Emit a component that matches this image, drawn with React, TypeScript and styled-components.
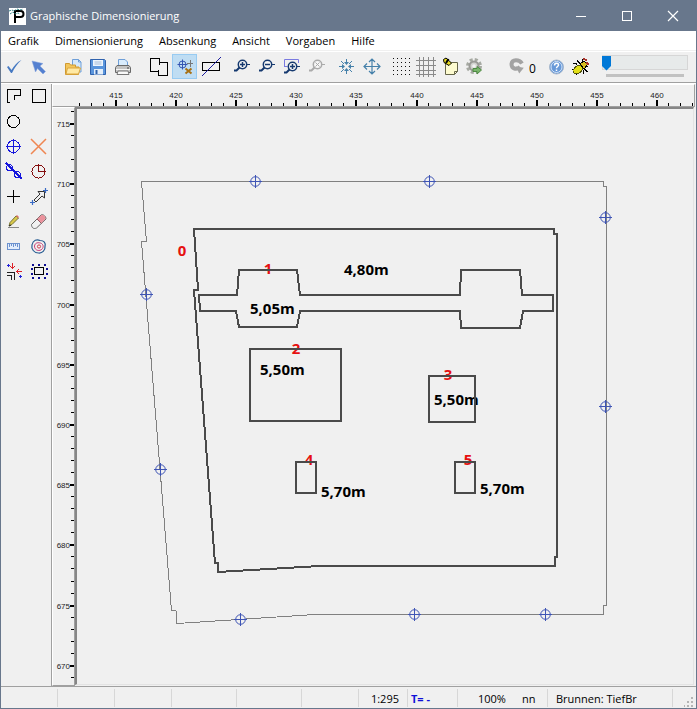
import React, { useLayoutEffect, useRef, useState } from "react";
import styled, { createGlobalStyle } from "styled-components";

const FACE = "#f0f0f0";
const UI_FONT = '"Open Sans", "Noto Sans", sans-serif';

const GlobalStyle = createGlobalStyle`
  *, *::before, *::after { box-sizing: border-box; }
  html, body { margin: 0; padding: 0; }
  body { font: 11px/16px ${UI_FONT}; color: #000; background: ${FACE}; }
  button { font: inherit; color: inherit; }
`;

const Window = styled.div`
  display: flex;
  flex-direction: column;
  min-height: 100vh;
  background: ${FACE};
  border: 1px solid #68778c;
`;

const TitleBar = styled.header`
  display: flex;
  align-items: center;
  height: 30px;
  padding-left: 8px;
  color: #fff;
  background: #68778c;
`;

const Title = styled.h1`
  flex: 1;
  margin: 0 0 0 4px;
  font-size: 11px;
  font-weight: 400;
  white-space: nowrap;
`;

const CaptionButton = styled.button`
  display: grid;
  place-items: center;
  width: 46px;
  height: 30px;
  padding: 0;
  border: 0;
  background: transparent;
`;

const MenuBar = styled.nav`
  display: flex;
  height: 20px;
  background: #fff;
  border-bottom: 1px solid ${FACE};
`;

const MenuItem = styled.button`
  height: 19px;
  padding: 0 8px;
  border: 0;
  background: transparent;

  &:first-child { padding-left: 7px; }
`;

const ToolBar = styled.div`
  display: flex;
  align-items: flex-start;
  height: 32px;
  padding-top: 2px;
  border-top: 1px solid #fff;
  border-bottom: 1px solid #a0a0a0;
`;

const ToolGroup = styled.div<{ $gap?: number }>`
  display: flex;
  flex: none;
  margin-left: ${(p) => p.$gap ?? 0}px;
`;

const ToolButton = styled.button<{ $active?: boolean }>`
  display: grid;
  place-items: center;
  width: 25px;
  height: 25px;
  padding: 0;
  border: 0;
  outline: ${(p) => (p.$active ? "1px solid #98cbf2" : "none")};
  outline-offset: -1px;
  background: ${(p) => (p.$active ? "#bfddf3" : "transparent")};
`;

const UndoCount = styled.output`
  width: 14px;
  padding-top: 6px;
  font-size: 12px;
  line-height: 18px;
`;

const SliderBox = styled.div`
  flex: 0 0 86px;
  margin: 0 8px 0 auto;
`;

const Slider = styled.input`
  appearance: none;
  display: block;
  width: 86px;
  height: 16px;
  margin: 0;
  background: transparent;

  &::-webkit-slider-runnable-track {
    height: 15px;
    border: 1px solid #d6d6d6;
    background: #e7eaea;
  }
  &::-webkit-slider-thumb {
    appearance: none;
    width: 9px;
    height: 15px;
    margin: 0 0 0 -1px;
    border: 0;
    background: #0078d7;
    clip-path: polygon(0 0, 100% 0, 100% 70%, 50% 100%, 0 70%);
  }
`;

const SliderScale = styled.div`
  height: 3px;
  margin: 4px 4px 0;
  background: #c2c2c2;
`;

const Workspace = styled.div`
  display: flex;
  flex: 1;
  border-top: 1px solid #fff;
`;

const Palette = styled.div`
  display: grid;
  grid-template-columns: repeat(2, 25px);
  grid-auto-rows: 25px;
  align-content: start;
  border-right: 1px solid #a0a0a0;
`;

const PaletteButton = styled(ToolButton)<{ $column?: number }>`
  grid-column: ${(p) => p.$column ?? "auto"};
`;

const Plan = styled.main`
  display: grid;
  flex: 1;
  grid-template: 23px 1fr / 23px 1fr;
  min-width: 0;
`;

const TopRuler = styled.div`
  grid-column: 1 / -1;
  border: solid;
  border-width: 1px;
  border-color: #fff #a0a0a0 #a0a0a0 #fff;
  margin-right: 1px;
`;

const SideRuler = styled.div`
  border: solid;
  border-width: 1px;
  border-color: #fff #a0a0a0 #a0a0a0 #fff;
`;

const DrawingPane = styled.div`
  border: solid;
  border-width: 2px 1px 1px 2px;
  border-color: #868686 #e3e3e3 #e3e3e3 #868686;
  margin: 0 2px 1px 0;
`;

const FillSvg = styled.svg`
  display: block;
  width: 100%;
  height: 100%;
`;

const ScaleText = styled.text`
  font: 8px "Liberation Sans", Arial, sans-serif;
  fill: #222;
`;

const IndexText = styled.text`
  font: 700 15px ${UI_FONT};
  fill: #e61010;
`;

const DepthText = styled.text`
  font: 700 15px ${UI_FONT};
  fill: #000;
`;

const StatusBar = styled.footer`
  display: flex;
  align-items: center;
  height: 22px;
  border-top: 1px solid #a0a0a0;
`;

const StatusCell = styled.div<{ $width: number; $align?: string; $accent?: boolean }>`
  flex: 0 0 ${(p) => p.$width}px;
  height: 18px;
  padding: 0 8px 0 3px;
  border-right: 1px solid #d7d7d7;
  line-height: 20px;
  text-align: ${(p) => p.$align ?? "left"};
  font-weight: ${(p) => (p.$accent ? 700 : 400)};
  color: ${(p) => (p.$accent ? "#1010d8" : "#000")};
  white-space: nowrap;
`;

const StatusPair = styled(StatusCell)`
  display: flex;
  gap: 16px;
  padding-left: 20px;
`;

const StatusText = styled(StatusCell)`
  padding-left: 8px;
`;

const Grip = styled.svg`
  align-self: flex-end;
  margin: 0 2px 1px auto;
`;

const Glyph = ({ children, crisp }: { children: React.ReactNode; crisp?: boolean }) => (
  <svg width="25" height="25" viewBox="0 0 25 25" fill="none" aria-hidden="true"
    shapeRendering={crisp ? "crispEdges" : "auto"}>
    {children}
  </svg>
);

const Loupe = ({ color, x = 0, y = 0, children }: { color: string; x?: number; y?: number; children?: React.ReactNode }) => (
  <g stroke={color} transform={`translate(${x} ${y})`}>
    <path d="M5 16.500h2.500l4-4" strokeWidth="2" />
    <circle cx="13.500" cy="10.500" r="4.200" strokeWidth="1.500" fill="#f6f6f6" />
    <path d="M18 10.500h3" />
    {children}
  </g>
);

type Tool = { name: string; icon: React.ReactNode };

const groups: { gap: number; tools: Tool[] }[] = [
  {
    gap: 0,
    tools: [
      { name: "Übernehmen", icon: <Glyph><path d="M6 13l1.500-1 3 4C13 12 16 8 20.500 6 16.500 9.500 13.500 14 11 19h-1z" fill="#4679c2" /></Glyph> },
      { name: "Auswählen", icon: <Glyph><path d="M6 7l11 2.500-3 2.500 5.500 5.500-2.500 2.500-5.500-5.500L9.500 18z" fill="#5480d0" stroke="#87a5dd" strokeWidth=".5" /></Glyph> },
    ],
  },
  {
    gap: 9,
    tools: [
      {
        name: "Öffnen",
        icon: (
          <Glyph>
            <path d="M12.500 5.500h6l2.500 2.500v10h-8.500z" fill="#d4e8fb" stroke="#6f9fd8" />
            <path d="M18.500 5.500V8H21" stroke="#6f9fd8" />
            <path d="M5.500 20.500v-11h4l1 1.500h5v2H19l-.5 7.500z" fill="#f3c65c" stroke="#d09a30" />
            <path d="M6 20l1.500-6h13l-2 6z" fill="#ffe9a4" stroke="#dba63e" />
          </Glyph>
        ),
      },
      {
        name: "Speichern",
        icon: (
          <Glyph>
            <path d="M5.500 5.500h14l1 1v14h-15z" fill="#5a95dc" stroke="#2f62ad" />
            <path d="M8 6h10v6H8z" fill="#edf5fd" />
            <path d="M9.500 8h7M9.500 10h7" stroke="#a6bcd8" />
            <path d="M9 15h9v5.500H9z" fill="#e4eef9" />
            <path d="M10.500 16h2v4h-2z" fill="#2f62ad" />
          </Glyph>
        ),
      },
      {
        name: "Drucken",
        icon: (
          <Glyph>
            <path d="M8.500 12V5.500h6.500l2.500 2.500v4z" fill="#d9ecfd" stroke="#6f9fd8" />
            <path d="M7 11.500h12l1.500 2v5h-15v-5z" fill="#c3c3c3" stroke="#696969" />
            <path d="M6 15.500h14" stroke="#f4f4f4" />
            <path d="M8 17h10l1 3.500H7z" fill="#f8f8f8" stroke="#777" />
            <path d="M17 14h2" stroke="#444" />
          </Glyph>
        ),
      },
    ],
  },
  {
    gap: 12,
    tools: [
      { name: "Umriss vereinigen", icon: <Glyph crisp><path d="M3.500 4.500h9v4h8v13h-9v-4h-8z" stroke="#000" /><path d="M12.500 8.500v2M11.500 15.500v2" stroke="#000" /></Glyph> },
      {
        name: "Brunnen setzen",
        icon: (
          <Glyph>
            <circle cx="10.500" cy="10.500" r="3.500" stroke="#3555b2" />
            <path d="M5.500 10.500h10M10.500 5.500v10" stroke="#3555b2" />
            <path d="M15 9.500h6M18.500 6v7" stroke="#777" />
            <path d="M13.500 14.500l6 5M19.500 14.500l-6 5" stroke="#a77013" strokeWidth="2" />
          </Glyph>
        ),
      },
      { name: "Schnitt", icon: <Glyph crisp><path d="M5.500 8.500h17v8h-17z" stroke="#000" /><path d="M5 22L24 3" stroke="#1c1c9e" /></Glyph> },
    ],
  },
  {
    gap: 7,
    tools: [
      { name: "Vergrößern", icon: <Glyph><Loupe color="#15396f"><path d="M11 10.500h5M13.500 8v5" strokeWidth="1.500" /></Loupe></Glyph> },
      { name: "Verkleinern", icon: <Glyph><Loupe color="#15396f"><path d="M11 10.500h5" strokeWidth="1.500" /></Loupe></Glyph> },
      { name: "Ausschnitt", icon: <Glyph><path d="M5.500 13V5.500h14V9M5.500 12.500h3" stroke="#7a7ae0" /><Loupe color="#15396f" y={2}><path d="M11 10.500h5M13.500 8v5" strokeWidth="1.500" /></Loupe></Glyph> },
      { name: "Zoom zurücksetzen", icon: <Glyph><Loupe color="#aaa"><path d="M11.500 8.500l4 4M15.500 8.500l-4 4" /></Loupe></Glyph> },
    ],
  },
  {
    gap: 5,
    tools: [
      {
        name: "Zentrieren",
        icon: (
          <Glyph>
            <path d="M5 12.500h5M15 12.500h5M12.500 5v5M12.500 15v5" stroke="#4681aa" />
            <path d="M8 10l3 2.500L8 15zM17 10l-3 2.500 3 2.500zM10 8l2.500 3L15 8zM10 17l2.500-3 2.500 3z" fill="#4681aa" />
            <path d="M7 7l3 3M18 7l-3 3M7 18l3-3M18 18l-3-3" stroke="#4681aa" />
          </Glyph>
        ),
      },
      { name: "Verschieben", icon: <Glyph><path d="M5 12.500h16M13 5v15M8 9.500l-3 3 3 3M18 9.500l3 3-3 3M10 8l3-3 3 3M10 17l3 3 3-3" stroke="#4681aa" strokeWidth="1.200" /></Glyph> },
    ],
  },
  {
    gap: 4,
    tools: [
      {
        name: "Punktraster",
        icon: (
          <Glyph crisp>
            {[5, 9, 13, 17, 21].map((y) => (
              <path key={y} d={`M5 ${y - 0.5}h17`} stroke="#111" strokeDasharray="1 3" />
            ))}
          </Glyph>
        ),
      },
      {
        name: "Linienraster",
        icon: <Glyph crisp><path d="M3 6.500h20M3 11.500h20M3 16.500h20M3 20.500h20M6.500 3v20M10.500 3v20M15.500 3v20M20.500 3v20" stroke="#8a8a8a" /></Glyph>,
      },
      {
        name: "Notiz",
        icon: (
          <Glyph>
            <path d="M7.500 8.500h12v9l-3 3h-9z" fill="#fdfbd0" stroke="#66664a" />
            <path d="M19.500 17.500h-3v3" stroke="#66664a" />
            <path d="M5.500 5.500L8 4l5.500 5-2.500 2.500-5-3z" fill="#e8dc20" stroke="#000" />
            <path d="M8 9l2.500-4" stroke="#000" strokeWidth="2" />
          </Glyph>
        ),
      },
      {
        name: "Berechnen",
        icon: (
          <Glyph>
            <circle cx="11" cy="12" r="6.500" stroke="#a7aaa3" strokeWidth="3" strokeDasharray="3 2.100" />
            <circle cx="11" cy="12" r="4.500" fill="#d2d2cf" stroke="#9a9a96" strokeWidth="2" />
            <circle cx="11" cy="12" r="1.800" fill="#f2f2f2" />
            <path d="M10 14.500h4V12.500l4.500 3.500-4.500 4v-2.500h-4z" fill="#7ab56c" stroke="#4d8a42" />
          </Glyph>
        ),
      },
    ],
  },
  {
    gap: 16,
    tools: [
      { name: "Rückgängig", icon: <Glyph><path d="M18 9.500C15 5 8 5 7.500 10c0 5 5 6 8.500 3" stroke="#a3a3a3" strokeWidth="4" /><path d="M11.500 13h8l-3.500 6.500z" fill="#a3a3a3" transform="rotate(10 15 15)" /></Glyph> },
    ],
  },
];

const helpTools: Tool[] = [
  {
    name: "Hilfe anzeigen",
    icon: (
      <Glyph>
        <circle cx="13.500" cy="13" r="7" fill="#6899d8" stroke="#a8b8cc" />
        <circle cx="13.500" cy="13" r="5.500" stroke="#d4e4f8" />
        <path d="M11.500 11.500c0-3 4-3 4-.5 0 1.500-2 1.500-2 3.200M13.500 15.500v1.600" stroke="#fff" strokeWidth="1.500" />
      </Glyph>
    ),
  },
  {
    name: "Fehlersuche",
    icon: (
      <Glyph crisp>
        <path d="M5 9h3l2 4M9 6l3 4M14 5l1 3M4 15h4M8 21l2-3M16 20l-1-4M20 18l-4-3M20 13l-3-2" stroke="#000" />
        <ellipse cx="10" cy="15.500" rx="5.500" ry="3.500" transform="rotate(-35 10 15.500)" fill="#e2df18" stroke="#55550a" />
        <path d="M12 10l4-3 4 3-4 5z" fill="#d7bd20" stroke="#000" />
        <path d="M15 5l4 1M19 8l1 3" stroke="#a7322b" strokeWidth="2" />
      </Glyph>
    ),
  },
];

type PaletteTool = Tool & { column?: number };

const paletteTools: PaletteTool[] = [
  { name: "Polygon", icon: <Glyph crisp><path d="M9 18.500H6.500v-13h13v6h-6v4" stroke="#000" /></Glyph> },
  { name: "Rechteck", icon: <Glyph crisp><path d="M6.500 5.500h13v13h-13z" stroke="#000" /></Glyph> },
  { name: "Kreis", column: 1, icon: <Glyph crisp><circle cx="12.500" cy="12.500" r="6" stroke="#000" /></Glyph> },
  { name: "Brunnen", column: 1, icon: <Glyph crisp><circle cx="12.500" cy="12.500" r="6" stroke="#1515dd" /><path d="M5 12.500h15M12.500 5v15" stroke="#1515dd" /></Glyph> },
  { name: "Löschen", icon: <Glyph><path d="M5 5l15 15M20 5L5 20" stroke="#ef8652" strokeWidth="1.500" /></Glyph> },
  { name: "Brunnenreihe", icon: <Glyph crisp><path d="M5 4l16 16" stroke="#1515dd" strokeWidth="2" /><circle cx="8.500" cy="8.500" r="3" stroke="#1515dd" /><circle cx="16.500" cy="15.500" r="3" stroke="#1515dd" /></Glyph> },
  { name: "Brunnenkreis", icon: <Glyph crisp><circle cx="12.500" cy="12.500" r="6.500" stroke="#850e0e" /><path d="M12.500 5v7.500h7.500" stroke="#850e0e" /></Glyph> },
  { name: "Punkt", icon: <Glyph crisp><path d="M6 12.500h13M12.500 6v13" stroke="#000" /></Glyph> },
  { name: "Skalieren", icon: <Glyph><path d="M8 16l6-6-2-2.500h6.500V14L16 12l-6 6z" stroke="#333" fill="#f0f0f0" /><path d="M4 18.500h5M6.500 16v5M17 6.500h5M19.500 4v5" stroke="#3a6bc5" strokeWidth="1.200" /></Glyph> },
  {
    name: "Bearbeiten",
    icon: <Glyph><path d="M7 18.500h11" stroke="#888" /><path d="M8 17l1-3.500L15 7l2.500 2-6.500 6.500z" fill="#d9c94a" stroke="#777338" /><path d="M15 7l1-1 2 2-1 1z" fill="#dd7468" /><path d="M8 17l2-1" stroke="#222" /></Glyph>,
  },
  {
    name: "Radieren",
    icon: <Glyph><path d="M5.500 15.500L15 6c2-1.200 5 1.200 5 4l-9.500 9c-3 1.500-5-.5-5-3.500z" fill="#f1f1f1" stroke="#666" /><path d="M11 10l4.200-3.700c2-1 4.300 1 4.400 3.500L15.500 14z" fill="#eb929c" /><path d="M11 10l4.500 4.500" stroke="#995860" /></Glyph>,
  },
  { name: "Messen", icon: <Glyph crisp><path d="M6.500 9.500h12v6h-12z" stroke="#6c92cf" fill="#e3edfc" /><path d="M8.500 10v3M10.500 10v2M12.500 10v3M14.500 10v2M16.500 10v3" stroke="#6c92cf" /></Glyph> },
  { name: "Isolinien", icon: <Glyph><path d="M6 11c1-5 5-6 8-4.500 4 0 6 2.500 5 6 .5 4-3 7-6.500 6.500C8 19 5 15 6 11z" stroke="#275c92" strokeWidth="1.200" /><path d="M8.500 12c.5-3.500 4-4 7-2.500 3 2 1.500 6-1.500 6.800-3 .7-5.500-1-5.500-4.300z" stroke="#c63e79" /><circle cx="13" cy="12.500" r="1.600" stroke="#d03e50" /></Glyph> },
  {
    name: "Ecke ausrichten",
    icon: (
      <Glyph crisp>
        <path d="M5.500 13.500h8v7M5.500 16.500h5v4" stroke="#222" />
        <path d="M11.500 4v5M9 7l2.500 2.500L14 7M21 12.500h-5M18 10l-2.500 2.500L18 15" stroke="#dd2028" />
        <path d="M6 6.500h3M7.500 5v3M18 17.500h3M19.500 16v3" stroke="#2020d8" />
      </Glyph>
    ),
  },
  {
    name: "Brunnen um Rechteck",
    icon: <Glyph crisp><path d="M8.500 8.500h9v7h-9z" stroke="#000" /><path d="M6 5h2v2h-2zM12 5h2v2h-2zM18 5h2v2h-2zM6 18h2v2h-2zM12 18h2v2h-2zM18 18h2v2h-2zM5 9h2v2h-2zM5 14h2v2h-2zM20 9h2v2h-2zM20 14h2v2h-2z" fill="#0c0c92" /></Glyph>,
  },
];

const H_STEP = 12.02;
const V_STEP = 12.04;

const range = (from: number, to: number) =>
  Array.from({ length: Math.max(0, to - from + 1) }, (_, i) => from + i);

function useSize() {
  const ref = useRef<SVGSVGElement>(null);
  const [size, setSize] = useState({ width: 0, height: 0 });
  useLayoutEffect(() => {
    const el = ref.current;
    if (!el) return;
    const read = () => {
      const box = el.getBoundingClientRect();
      setSize({ width: box.width, height: box.height });
    };
    read();
    const observer = new ResizeObserver(read);
    observer.observe(el);
    return () => observer.disconnect();
  }, []);
  return { ref, size };
}

const HorizontalScale = () => {
  const { ref, size } = useSize();
  const last = 415 + Math.floor((size.width - 62) / H_STEP);
  return (
    <FillSvg ref={ref} shapeRendering="crispEdges">
      {range(412, last).map((v) => {
        const x = Math.round(62 + (v - 415) * H_STEP);
        const major = v % 5 === 0;
        return (
          <g key={v}>
            <rect x={x} y={major ? 15 : 18} width={major ? 2 : 1} height={major ? 6 : 3} />
            {major && x < size.width - 8 && <ScaleText x={x + 1} y={13} textAnchor="middle">{v}</ScaleText>}
          </g>
        );
      })}
    </FillSvg>
  );
};

const VerticalScale = () => {
  const { ref, size } = useSize();
  const first = 715 - Math.floor((size.height - 15) / V_STEP);
  return (
    <FillSvg ref={ref} shapeRendering="crispEdges">
      {range(first, 716).map((v) => {
        const y = Math.round(15 + (715 - v) * V_STEP);
        const major = v % 5 === 0;
        return (
          <g key={v}>
            <rect x={major ? 17 : 18} y={y} width={major ? 4 : 3} height={major ? 2 : 1} />
            {major && y < size.height - 5 && <ScaleText x={17} y={y + 4} textAnchor="end">{v}</ScaleText>}
          </g>
        );
      })}
    </FillSvg>
  );
};

const wells = [
  [255, 181], [429, 181], [605, 217], [146, 294], [605, 406],
  [160, 469], [240, 619], [414, 614], [545, 614],
];

const pits = [
  "M194 229H554V234H557V557H555V566H320L218 572V563H215L194 290H198Z",
  "M199 295H237L239 270H297L300 295H460L461 270H520L522 295H553V311H523L520 328H461L460 311H300L297 327H239L236 311H200Z",
  "M250 349H341V421H250Z",
  "M429 376H475V422H429Z",
  "M296 462H316V493H296Z",
  "M455 462H475V493H455Z",
];

const indices = [
  { x: 182, y: 256, text: "0" }, { x: 268, y: 274, text: "1" }, { x: 296, y: 354, text: "2" },
  { x: 448, y: 380, text: "3" }, { x: 309, y: 465, text: "4" }, { x: 468, y: 465, text: "5" },
];

const depths = [
  { x: 344, y: 275, text: "4,80m" }, { x: 250, y: 314, text: "5,05m" }, { x: 260, y: 375, text: "5,50m" },
  { x: 434, y: 405, text: "5,50m" }, { x: 321, y: 497, text: "5,70m" }, { x: 480, y: 494, text: "5,70m" },
];

const Drawing = () => (
  <FillSvg role="img" aria-label="Baugrube mit Brunnen">
    <g transform="translate(-77 -109)">
      {depths.map((d) => (
        <DepthText key={`${d.x}-${d.y}`} x={d.x} y={d.y}>{d.text}</DepthText>
      ))}
      {indices.map((d) => (
        <IndexText key={d.text} x={d.x} y={d.y} textAnchor="middle">{d.text}</IndexText>
      ))}
      <path
        d="M141.500 181.500H603.500V186.500H606.500V605.500H603.500V614.500H315L177 623.500L176 610.500H171.500L141.500 241.500H146.500Z"
        fill="none" stroke="#808080" shapeRendering="crispEdges" />
      <g fill="none" stroke="#4a4a4a" strokeWidth="2" shapeRendering="crispEdges">
        {pits.map((d) => <path key={d} d={d} />)}
      </g>
      <g fill="none" stroke="#3f55b5">
        {wells.map(([x, y]) => (
          <g key={`${x}-${y}`} transform={`translate(${x + 0.5} ${y + 0.5})`}>
            <circle r="4.800" />
            <path d="M-6.500 0h13M0 -6.500v13" />
          </g>
        ))}
      </g>
    </g>
  </FillSvg>
);

const menus = ["Grafik", "Dimensionierung", "Absenkung", "Ansicht", "Vorgaben", "Hilfe"];

export default function App() {
  const [active, setActive] = useState("Brunnen setzen");
  const renderTool = (t: Tool) => (
    <ToolButton key={t.name} type="button" aria-label={t.name} $active={t.name === active} onClick={() => setActive(t.name)}>
      {t.icon}
    </ToolButton>
  );

  return (
    <>
      <GlobalStyle />
      <Window>
        <TitleBar>
          <svg width="17" height="17" viewBox="0 0 17 17" aria-hidden="true">
            <path d="M0 0h17v17H0z" fill="#fff" />
            <path d="M6 15V3h5.500a3 3 0 0 1 0 6H6" fill="none" stroke="#000" strokeWidth="2" />
            <path d="M0 3l3-1 2 1 3-2 3 1 3-1M1 6l3-2 2 2 3-1 2 1" fill="none" stroke="#35868b" strokeDasharray="2 1" />
          </svg>
          <Title>Graphische Dimensionierung</Title>
          <CaptionButton type="button" aria-label="Minimieren">
            <svg width="12" height="12" shapeRendering="crispEdges"><path d="M1 6.500h10" stroke="#fff" /></svg>
          </CaptionButton>
          <CaptionButton type="button" aria-label="Maximieren">
            <svg width="12" height="12" shapeRendering="crispEdges"><path d="M1.500 1.500h9v9h-9z" fill="none" stroke="#fff" /></svg>
          </CaptionButton>
          <CaptionButton type="button" aria-label="Schließen">
            <svg width="12" height="12"><path d="M1 1l10 10M11 1L1 11" stroke="#fff" strokeWidth="1.200" /></svg>
          </CaptionButton>
        </TitleBar>
        <MenuBar>
          {menus.map((m) => <MenuItem key={m} type="button">{m}</MenuItem>)}
        </MenuBar>
        <ToolBar>
          {groups.map((g) => (
            <ToolGroup key={g.tools[0].name} $gap={g.gap}>{g.tools.map(renderTool)}</ToolGroup>
          ))}
          <UndoCount>0</UndoCount>
          <ToolGroup>{helpTools.map(renderTool)}</ToolGroup>
          <SliderBox>
            <Slider type="range" aria-label="Transparenz" min={0} max={100} defaultValue={0} />
            <SliderScale />
          </SliderBox>
        </ToolBar>
        <Workspace>
          <Palette>
            {paletteTools.map((t) => (
              <PaletteButton key={t.name} type="button" aria-label={t.name} $column={t.column}>{t.icon}</PaletteButton>
            ))}
          </Palette>
          <Plan>
            <TopRuler><HorizontalScale /></TopRuler>
            <SideRuler><VerticalScale /></SideRuler>
            <DrawingPane><Drawing /></DrawingPane>
          </Plan>
        </Workspace>
        <StatusBar>
          <StatusCell $width={57} />
          <StatusCell $width={57} />
          <StatusCell $width={57} />
          <StatusCell $width={65} />
          <StatusCell $width={65} />
          <StatusCell $width={57} />
          <StatusCell $width={49} $align="right">1:295</StatusCell>
          <StatusCell $width={50} $accent>T= -</StatusCell>
          <StatusPair $width={90}><span>100%</span><span>nn</span></StatusPair>
          <StatusText $width={125}>Brunnen: TiefBr</StatusText>
          <Grip width="10" height="10" shapeRendering="crispEdges" aria-hidden="true">
            <path d="M7 0h2v2h-2zM7 4h2v2h-2zM7 8h2v2h-2zM3 4h2v2h-2zM3 8h2v2h-2zM0 8h1v2h-1z" fill="#b4b4b4" />
          </Grip>
        </StatusBar>
      </Window>
    </>
  );
}
